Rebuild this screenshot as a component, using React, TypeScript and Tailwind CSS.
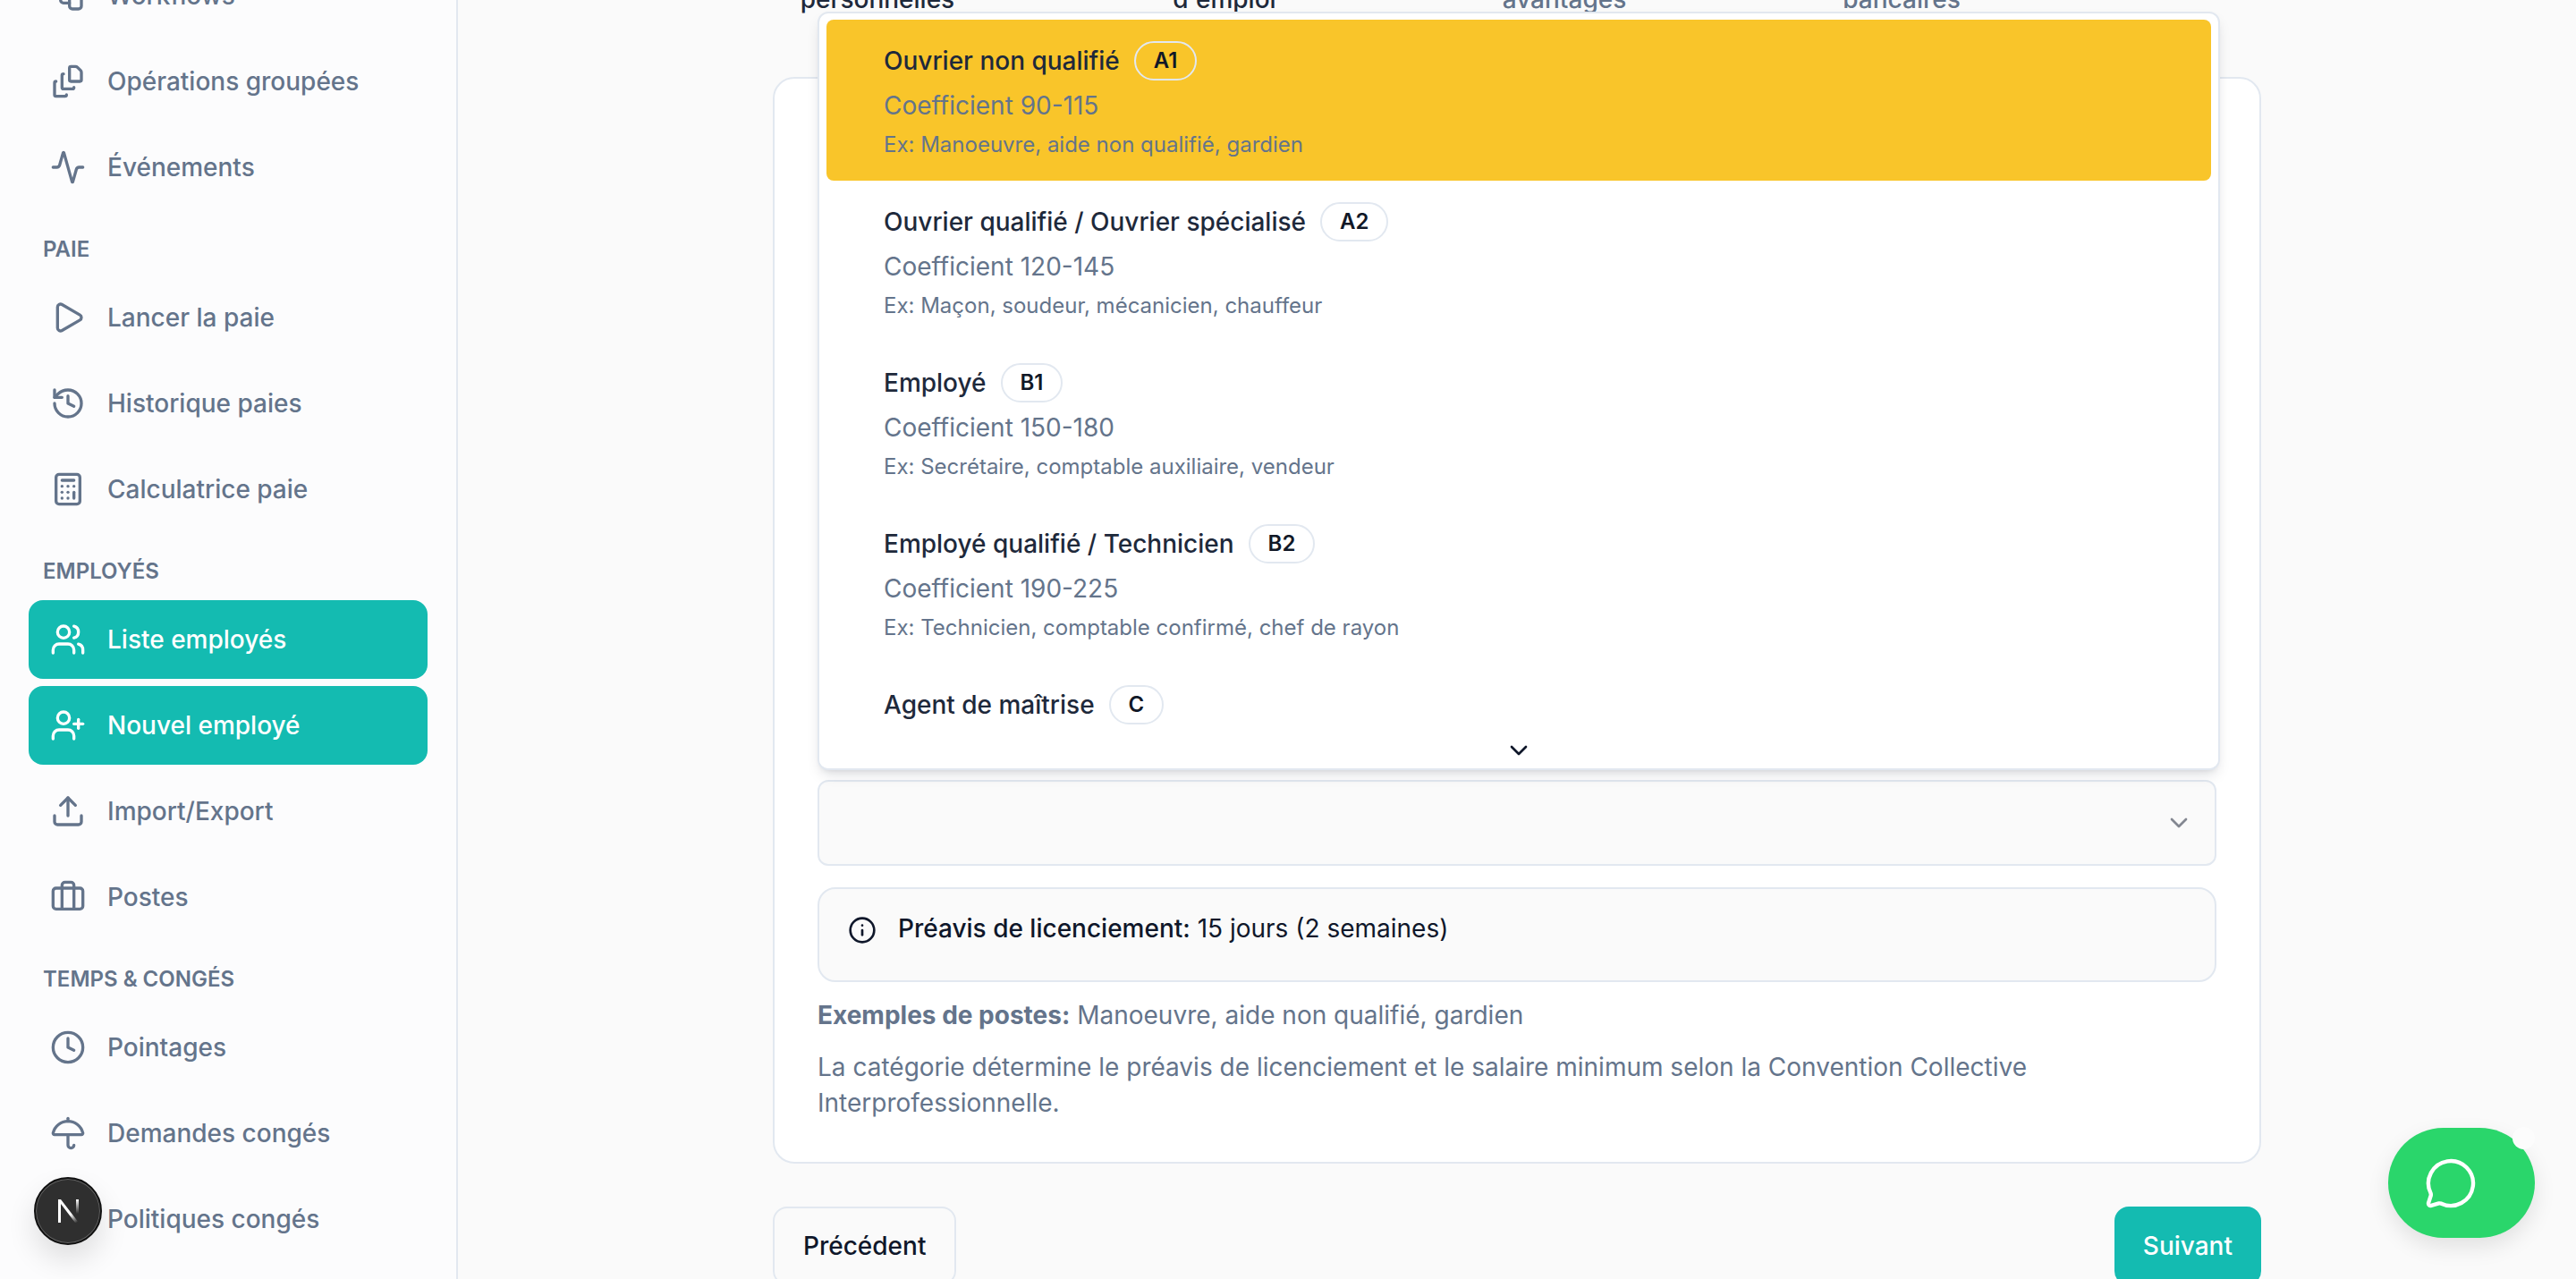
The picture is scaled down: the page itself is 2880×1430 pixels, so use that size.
import {
  Activity,
  Briefcase,
  Calculator,
  ChevronDown,
  Clock,
  FileStack,
  FileText,
  History,
  Info,
  MessageCircle,
  Play,
  Umbrella,
  Upload,
  UserPlus,
  Users,
  Workflow,
} from 'lucide-react';

type NavItem = { label: string; icon: typeof Play; active?: boolean };
type NavGroup = { title?: string; items: NavItem[] };

const navGroups: NavGroup[] = [
  {
    items: [
      { label: 'Workflows', icon: Workflow },
      { label: 'Opérations groupées', icon: FileStack },
      { label: 'Événements', icon: Activity },
    ],
  },
  {
    title: 'Paie',
    items: [
      { label: 'Lancer la paie', icon: Play },
      { label: 'Historique paies', icon: History },
      { label: 'Calculatrice paie', icon: Calculator },
    ],
  },
  {
    title: 'Employés',
    items: [
      { label: 'Liste employés', icon: Users, active: true },
      { label: 'Nouvel employé', icon: UserPlus, active: true },
      { label: 'Import/Export', icon: Upload },
      { label: 'Postes', icon: Briefcase },
    ],
  },
  {
    title: 'Temps & congés',
    items: [
      { label: 'Pointages', icon: Clock },
      { label: 'Demandes congés', icon: Umbrella },
      { label: 'Politiques congés', icon: FileText },
    ],
  },
];

const categories = [
  { name: 'Ouvrier non qualifié', code: 'A1', coef: 'Coefficient 90-115', ex: 'Ex: Manoeuvre, aide non qualifié, gardien', selected: true },
  { name: 'Ouvrier qualifié / Ouvrier spécialisé', code: 'A2', coef: 'Coefficient 120-145', ex: 'Ex: Maçon, soudeur, mécanicien, chauffeur' },
  { name: 'Employé', code: 'B1', coef: 'Coefficient 150-180', ex: 'Ex: Secrétaire, comptable auxiliaire, vendeur' },
  { name: 'Employé qualifié / Technicien', code: 'B2', coef: 'Coefficient 190-225', ex: 'Ex: Technicien, comptable confirmé, chef de rayon' },
  { name: 'Agent de maîtrise', code: 'C', coef: 'Coefficient 240-335', ex: 'Ex: Chef de chantier, superviseur' },
];

function Sidebar() {
  return (
    <aside className="w-[512px] shrink-0 border-r-2 border-[#e2e8f0] bg-[#fcfcfd] pl-[32px] pr-[32px]">
      <div className="mt-[-49px] flex flex-col">
        {navGroups.map((group, i) => (
          <div key={i}>
            {group.title && (
              <div className="mt-[32px] mb-[16px] pl-[16px] text-[24px] leading-[32px] font-semibold uppercase text-[#64748b]">
                {group.title}
              </div>
            )}
            <div className="flex flex-col gap-[8px]">
              {group.items.map((item) => (
                <div
                  key={item.label}
                  className={`flex h-[88px] items-center gap-[24px] rounded-[16px] pl-[24px] text-[28px] font-medium ${
                    item.active ? 'bg-[#14bbb1] text-white' : 'text-[#64748b]'
                  }`}
                >
                  <item.icon size={40} />
                  <span>{item.label}</span>
                </div>
              ))}
            </div>
          </div>
        ))}
      </div>
    </aside>
  );
}

function CategoryDropdown() {
  return (
    <div className="absolute left-[914px] top-[13px] z-20 flex h-[848px] w-[1568px] flex-col overflow-hidden rounded-[12px] border-2 border-[#e2e8f0] bg-white shadow-[0_8px_16px_-4px_rgba(15,23,42,0.15),0_4px_6px_-4px_rgba(15,23,42,0.1)]">
      <div className="flex-1 overflow-hidden px-[8px] pt-[7px]">
        {categories.map((c) => (
          <div
            key={c.code}
            className={`h-[180px] rounded-[8px] pl-[64px] pt-[24px] ${c.selected ? 'bg-[#f9c52a]' : ''}`}
          >
            <div className="flex h-[44px] items-center gap-[16px]">
              <span className="text-[28px] font-medium text-[#1e293b]">{c.name}</span>
              <span className="flex h-[44px] items-center rounded-full border-2 border-[#e2e8f0] px-[20px] text-[24px] font-semibold text-[#111827]">
                {c.code}
              </span>
            </div>
            <div className="mt-[8px] text-[28px] leading-[40px] text-[#64748b]">{c.coef}</div>
            <div className="mt-[8px] text-[24px] leading-[32px] text-[#64748b]">{c.ex}</div>
          </div>
        ))}
      </div>
      <div className="flex h-[40px] shrink-0 items-center justify-center bg-white">
        <ChevronDown size={32} className="text-[#0f172a]" />
      </div>
    </div>
  );
}

function StepLabels() {
  return (
    <div className="mt-[-61px] mb-[67px] flex text-center text-[28px] leading-[40px] font-medium">
      <div className="w-[234px] text-[#1e293b]">Informations<br />personnelles</div>
      <div className="w-[542px] text-[#1e293b]">Contrat<br />d'emploi</div>
      <div className="w-[218px] text-[#64748b]">Salaire et<br />avantages</div>
      <div className="w-[536px] text-[#64748b]">Coordonnées<br />bancaires</div>
    </div>
  );
}

export default function App() {
  return (
    <div className="relative flex h-[1430px] overflow-hidden bg-[#fafafa] [font-family:Inter,sans-serif]">
      <Sidebar />

      <main className="flex flex-1 justify-center">
        <div className="w-[1664px]">
          <StepLabels />

          <section className="rounded-[24px] border-2 border-[#e2e8f0] bg-white px-[48px] pt-[784px] pb-[46px]">
            {/* fields above this point sit behind the open dropdown */}
            <div className="flex h-[96px] items-center justify-end rounded-[12px] border-2 border-[#e2e8f0] bg-[#fafafa] pr-[24px]">
              <ChevronDown size={32} className="text-[#0f172a] opacity-50" />
            </div>

            <div className="mt-[24px] flex h-[106px] items-start gap-[24px] rounded-[20px] border-2 border-[#e2e8f0] bg-[#fafafa] pl-[32px] pt-[24px]">
              <Info size={32} className="mt-[6px] text-[#0f172a]" />
              <p className="text-[28px] leading-[40px] text-[#0f172a]">
                <span className="font-medium">Préavis de licenciement:</span> 15 jours (2 semaines)
              </p>
            </div>

            <p className="mt-[17px] text-[28px] leading-[40px] text-[#64748b]">
              <span className="font-bold">Exemples de postes:</span> Manoeuvre, aide non qualifié, gardien
            </p>
            <p className="mt-[18px] text-[28px] leading-[40px] text-[#64748b]">
              La catégorie détermine le préavis de licenciement et le salaire minimum selon la Convention Collective
              Interprofessionnelle.
            </p>
          </section>

          <div className="mt-[48px] flex justify-between">
            <button className="h-[88px] rounded-[16px] border-2 border-[#e2e8f0] bg-[#fafafa] px-[32px] text-[28px] font-medium text-[#0f172a]">
              Précédent
            </button>
            <button className="h-[88px] rounded-[16px] bg-[#14bbb1] px-[32px] text-[28px] font-medium text-white">
              Suivant
            </button>
          </div>
        </div>
      </main>

      <CategoryDropdown />

      {/* dev indicator */}
      <div className="absolute left-[38px] top-[1316px] z-30 flex h-[76px] w-[76px] items-center justify-center rounded-full border-2 border-[#111111] bg-[#2f2f2f] shadow-[0_16px_32px_rgba(0,0,0,0.12),inset_0_0_0_1px_rgba(255,255,255,0.25)]">
        <svg width="28" height="28" viewBox="0 0 28 28" fill="none">
          <defs>
            <linearGradient id="nDiag" x1="6" y1="4" x2="24" y2="27" gradientUnits="userSpaceOnUse">
              <stop offset="0.6" stopColor="#fff" />
              <stop offset="1" stopColor="#fff" stopOpacity="0" />
            </linearGradient>
            <linearGradient id="nBar" x1="25" y1="1" x2="25" y2="17" gradientUnits="userSpaceOnUse">
              <stop stopColor="#fff" />
              <stop offset="1" stopColor="#fff" stopOpacity="0" />
            </linearGradient>
          </defs>
          <path d="M3 27V1h3l20 26h-4L6 6v21z" fill="url(#nDiag)" />
          <rect x="23" y="1" width="3" height="16" fill="url(#nBar)" />
        </svg>
      </div>

      {/* chat bubble */}
      <div className="absolute left-[2670px] top-[1261px] z-30 flex h-[123px] w-[164px] items-center rounded-full bg-[#2ad66b] pl-[40px] shadow-[0_10px_24px_rgba(0,0,0,0.1)]">
        <MessageCircle size={60} strokeWidth={1.75} className="text-white" />
        <span className="absolute left-[139px] top-[-1px] h-[25px] w-[25px] rounded-full bg-[#fcfcfc]" />
      </div>
    </div>
  );
}
